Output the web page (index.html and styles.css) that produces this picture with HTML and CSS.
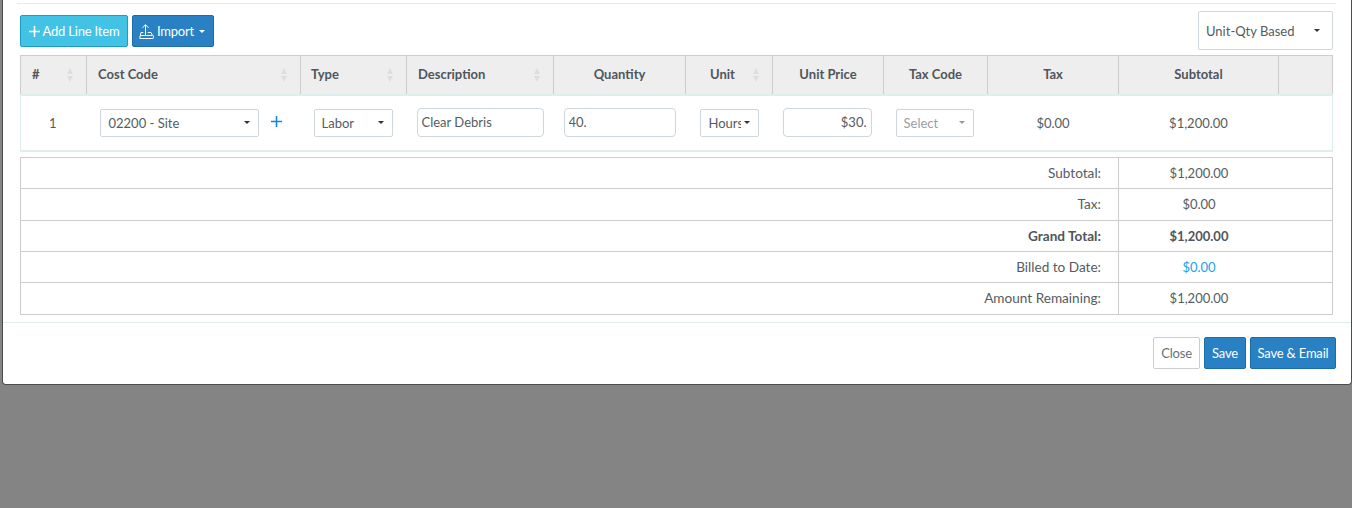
FILE: index.html
```html
<!DOCTYPE html>
<html lang="en">
<head>
<meta charset="utf-8">
<title>Line Items</title>
<link rel="stylesheet" href="styles.css">
</head>
<body>
<div class="modal">
  <div class="body">
    <div class="toolbar">
      <div class="actions">
        <button class="btn btn-info"><svg class="ico-plus" width="11" height="11" viewBox="0 0 11 11"><path d="M5.5 0v11M0 5.5h11" stroke="#fff" stroke-width="1.5" fill="none"/></svg>Add Line Item</button>
        <button class="btn btn-primary btn-import"><svg class="ico-up" width="15" height="15" viewBox="0 0 15 15"><path d="M6.5 11V0.8M3.4 3.9l3.1-3.1 3.1 3.1M4.3 8.5H2L0.7 14.5H13a1.6 1.6 0 0 0 0.4-3.2L12 8.5H8.7M1.4 11.5h11.6" stroke="#fff" stroke-width="1" fill="none"/></svg>Import<span class="caret caret-white"></span></button>
      </div>
      <div class="select select-mode"><span>Unit-Qty Based</span><span class="caret"></span></div>
    </div>

    <table class="grid">
      <colgroup>
        <col class="c1"><col class="c2"><col class="c3"><col class="c4"><col class="c5"><col class="c6"><col class="c7"><col class="c8"><col class="c9"><col class="c10"><col class="c11">
      </colgroup>
      <thead>
        <tr>
          <th class="left"># <span class="sort"></span></th>
          <th class="left">Cost Code <span class="sort"></span></th>
          <th class="left th-type">Type <span class="sort"></span></th>
          <th class="left">Description <span class="sort"></span></th>
          <th>Quantity</th>
          <th class="th-unit">Unit <span class="sort"></span></th>
          <th>Unit Price</th>
          <th>Tax Code</th>
          <th>Tax</th>
          <th>Subtotal</th>
          <th></th>
        </tr>
      </thead>
      <tbody>
        <tr>
          <td class="cell-num">1</td>
          <td><div class="code-wrap"><div class="select select-code"><span>02200 - Site</span><span class="caret"></span></div><svg class="add" width="11" height="11" viewBox="0 0 11 11"><path d="M5.5 0v11M0 5.5h11" stroke="#1488e6" stroke-width="1.6" fill="none"/></svg></div></td>
          <td><div class="select select-type"><span>Labor</span><span class="caret"></span></div></td>
          <td><input class="input input-desc" value="Clear Debris"></td>
          <td><input class="input input-qty" value="40."></td>
          <td><div class="select select-unit"><span class="clip">Hours</span><span class="caret"></span></div></td>
          <td><input class="input input-price" value="$30."></td>
          <td><div class="select select-tax"><span>Select</span><span class="caret caret-muted"></span></div></td>
          <td>$0.00</td>
          <td>$1,200.00</td>
          <td class="cell-end"></td>
        </tr>
      </tbody>
    </table>

    <table class="totals">
      <colgroup><col class="t1"><col class="t2"></colgroup>
      <tr class="r31"><th>Subtotal:</th><td>$1,200.00</td></tr>
      <tr class="r32"><th>Tax:</th><td>$0.00</td></tr>
      <tr class="r31"><th class="bold">Grand Total:</th><td class="bold">$1,200.00</td></tr>
      <tr class="r31"><th>Billed to Date:</th><td class="link">$0.00</td></tr>
      <tr class="r32"><th>Amount Remaining:</th><td>$1,200.00</td></tr>
    </table>
  </div>
  <div class="footer">
    <button class="btn btn-default">Close</button>
    <button class="btn btn-primary btn-save">Save</button>
    <button class="btn btn-primary btn-email">Save &amp; Email</button>
  </div>
</div>
</body>
</html>
```
FILE: styles.css
```css
* { box-sizing: border-box; }
html, body { margin: 0; height: 100%; }
body {
  background: #848484;
  font-family: Lato, "Open Sans", sans-serif;
  font-size: 13px;
  color: #555c60;
  overflow: hidden;
}
.modal {
  margin: 0 0 0 2px;
  height: 385px;
  background: #fff;
  border-bottom: 1px solid #4c4c4c;
  border-left: 1px solid #4c4c4c;
  border-right: 1px solid #4c4c4c;
  border-radius: 0 0 4px 4px;
  display: flex;
  flex-direction: column;
}
.body {
  margin: 3px 15px 0 14px;
  border-top: 1px solid #dcefed;
  padding: 7px 3px 0 3px;
  height: 319px;
}
.toolbar {
  display: flex;
  justify-content: space-between;
  align-items: flex-start;
  height: 44px;
}
.actions { display: flex; gap: 4px; margin-top: 4px; }
.btn {
  font: inherit;
  height: 32px;
  border-radius: 2px;
  padding: 0;
  letter-spacing: -0.2px;
  display: inline-flex;
  align-items: center;
  justify-content: center;
}
.btn-info {
  width: 108px;
  background: #42c3e6;
  border: 1px solid #1a9fc4;
  color: #fff;
}
.btn-primary {
  background: #2981c4;
  border: 1px solid #1a6ea8;
  color: #fff;
}
.btn-import { width: 82px; padding-right: 2px; }
.btn-default {
  width: 47px;
  background: #fff;
  border: 1px solid #ccc;
  color: #6a7175;
}
.btn-save { width: 42px; }
.btn-email { width: 86px; }
.ico-plus { margin-right: 3px; }
.ico-up { margin-right: 3px; margin-top: 1px; }
.caret {
  display: inline-block;
  flex: none;
  width: 0;
  height: 0;
  border-left: 3px solid transparent;
  border-right: 3px solid transparent;
  border-top: 3px solid #333;
}
.caret-white { border-top-color: #fff; margin-left: 5px; }
.caret-muted { border-top-color: #999; }
.select {
  display: flex;
  align-items: center;
  justify-content: space-between;
  border: 1px solid #cfd6dc;
  border-radius: 2px;
  background: #fff;
  color: #555c60;
  height: 28px;
  padding: 0 8px;
}
.select-mode {
  width: 135px;
  height: 39px;
  padding: 0 12px 0 7px;
}
.select-code { width: 159px; }
.select-type { width: 79px; margin-left: 13px; padding-left: 7px; }
.select-unit { width: 59px; margin-left: 14px; padding-right: 8px; }
.select-tax { width: 78px; margin-left: 12px; color: #9a9fa3; padding-left: 7px; }
.clip { display: block; width: 32px; overflow: hidden; white-space: nowrap; }
.grid, .totals {
  border-collapse: collapse;
  table-layout: fixed;
  width: 1312px;
}
.c1 { width: 66px; } .c2 { width: 214px; } .c3 { width: 106px; }
.c4 { width: 147px; } .c5 { width: 132px; } .c6 { width: 87px; }
.c7 { width: 111px; } .c8 { width: 104px; } .c9 { width: 131px; }
.c10 { width: 160px; } .c11 { width: 54px; }
.grid th {
  position: relative;
  height: 39px;
  background: #eeeeee;
  border: 1px solid #cccccc;
  font-weight: 700;
  color: #4f565b;
  padding: 0 0 2px;
  text-align: center;
}
.grid th.left { text-align: left; padding-left: 11px; }
.grid th.th-type { padding-left: 10px; }
.grid th.th-unit { padding-right: 13px; }
.sort {
  position: absolute;
  right: 12px;
  top: 12px;
  width: 7px;
  height: 14px;
}
.sort::before, .sort::after {
  content: "";
  position: absolute;
  left: 0;
  width: 0;
  height: 0;
  border-left: 3.5px solid transparent;
  border-right: 3.5px solid transparent;
}
.sort::before { top: 0; border-bottom: 6px solid #dcdee3; }
.sort::after { bottom: 0; border-top: 6px solid #dcdee3; }
.grid tbody tr { height: 56px; }
.grid tbody td {
  border-top: 2px solid #dcefed;
  border-bottom: 2px solid #dcefed;
  padding: 0;
  text-align: center;
}
.grid tbody td.cell-num { border-left: 1px solid #dcefed; padding-right: 2px; }
.grid tbody td.cell-end { border-right: 1px solid #dcefed; }
.code-wrap { display: flex; align-items: center; padding-left: 13px; }
.add { margin-left: 12px; margin-top: -3px; flex: none; }
.input {
  font: inherit;
  color: #555c60;
  height: 29px;
  border: 1px solid #cfd6dc;
  border-radius: 4px;
  padding: 0 4px;
  background: #fff;
  outline: none;
  display: block;
  margin-top: -1px;
}
.input-desc { width: 127px; margin-left: 10px; }
.input-qty { width: 112px; margin-left: 10px; }
.input-price { width: 89px; margin-left: 10px; text-align: right; }
.totals { margin-top: 5px; }
.t1 { width: 1098px; } .t2 { width: 214px; }
.r31 { height: 31px; }
.r32 { height: 32px; }
.totals th, .totals td {
  border: 1px solid #cccccc;
  padding: 0;
  font-weight: 400;
}
.totals th { text-align: right; padding-right: 17px; font-size: 13.6px; }
.totals td { text-align: center; padding-right: 54px; padding-left: 1px; }
.totals .bold { font-weight: 700; color: #4f565b; }
.totals .link { color: #1aa3ea; }
.footer {
  border-top: 1px solid #dcefed;
  flex: 1;
  display: flex;
  justify-content: flex-end;
  align-items: flex-start;
  gap: 4px;
  padding: 14px 15px 0 0;
}
```
